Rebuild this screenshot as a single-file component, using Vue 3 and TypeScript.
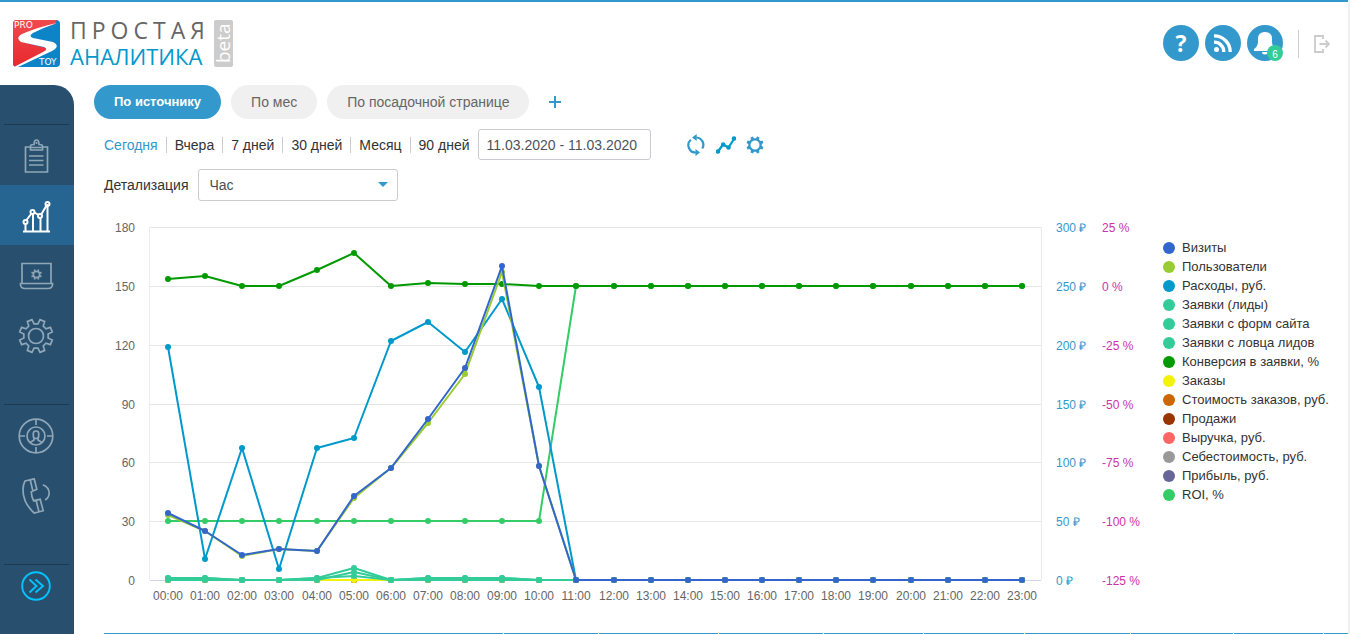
<script setup lang="ts">
import { computed, onBeforeUnmount, onMounted, ref } from 'vue'

interface Series {
  name: string
  color: string
  max: number
  min: number
  values: number[]
}

const tabs = ['По источнику', 'По мес', 'По посадочной странице']
const activeTab = ref(0)
const periods = ['Сегодня', 'Вчера', '7 дней', '30 дней', 'Месяц', '90 дней']
const activePeriod = ref(0)
const dateRange = ref('11.03.2020 - 11.03.2020')
const detail = ref('Час')

const HOURS = 24
const pad = (start: number[], rest = 0): number[] =>
  Array.from({ length: HOURS }, (_, i) => start[i] ?? rest)

const count = (name: string, color: string, start: number[]): Series => ({
  name, color, min: 0, max: 180, values: pad(start),
})
const money = (name: string, color: string, start: number[]): Series => ({
  name, color, min: 0, max: 300, values: pad(start),
})

const series: Series[] = [
  count('Визиты', '#3366cc', [34, 25, 13, 16, 15, 43, 57, 82, 108, 160, 58]),
  count('Пользователи', '#99cc33', [33, 25, 12, 16, 15, 42, 57, 80, 105, 157, 58]),
  money('Расходы, руб.', '#0099cc', [198, 18, 112, 9, 112, 121, 203, 219, 194, 239, 164]),
  count('Заявки (лиды)', '#33cc99', [1, 1, 0, 0, 1, 6, 0, 1, 1, 1]),
  count('Заявки с форм сайта', '#33cc99', [0, 0, 0, 0, 0, 4]),
  count('Заявки с ловца лидов', '#33cc99', [1, 1, 0, 0, 1, 2, 0, 1, 1, 1]),
  { name: 'Конверсия в заявки, %', color: '#009900', min: -125, max: 25, values: pad([2.9, 4, 0, 0, 6.7, 14, 0, 1.2, 0.9, 0.6]) },
  count('Заказы', '#f2f20d', []),
  money('Стоимость заказов, руб.', '#cc6600', []),
  count('Продажи', '#993300', []),
  money('Выручка, руб.', '#ff6666', []),
  money('Себестоимость, руб.', '#999999', []),
  money('Прибыль, руб.', '#666699', []),
  { name: 'ROI, %', color: '#33cc66', min: -125, max: 25, values: pad(Array(11).fill(-100)) },
]
/* Layer order: the first legend entries lie on top, orders cover the other zero lines */
const drawn = [...series].reverse()

const chartBox = ref<HTMLElement | null>(null)
const width = ref(1044)
const LEFT = 46
const TOP = 16
const PLOT_H = 353
const right = computed(() => width.value - 107)
const step = computed(() => (right.value - LEFT) / HOURS)
const px = (i: number) => Math.floor(LEFT + step.value * (i + 0.5))
const py = (s: Series, v: number) => Math.round(TOP + (PLOT_H * (s.max - v)) / (s.max - s.min))
const path = (s: Series) => s.values.map((v, i) => `${px(i)},${py(s, v)}`).join(' ')

const rows = Array.from({ length: 7 }, (_, i) => ({
  y: Math.round(TOP + (PLOT_H * i) / 6),
  left: `${180 - i * 30}`,
  rub: `${300 - i * 50} ₽`,
  pct: `${25 - i * 25} %`,
}))
const hour = (i: number) => `${String(i).padStart(2, '0')}:00`

/* Outline of a toothed wheel centred on c */
function gear(c: number, outer: number, inner: number, teeth: number): string {
  const pts: string[] = []
  const turn = (Math.PI * 2) / teeth
  for (let i = 0; i < teeth; i++) {
    const a = i * turn + turn / 2
    for (const [o, r] of [[-0.3, inner], [-0.19, outer], [0.19, outer], [0.3, inner]]) {
      pts.push(`${(c + r * Math.cos(a + o * turn)).toFixed(2)} ${(c + r * Math.sin(a + o * turn)).toFixed(2)}`)
    }
  }
  return `M${pts.join('L')}Z`
}

let observer: ResizeObserver | undefined
onMounted(() => {
  if (!chartBox.value) return
  observer = new ResizeObserver(([entry]) => {
    width.value = Math.max(400, Math.round(entry.contentRect.width))
  })
  observer.observe(chartBox.value)
})
onBeforeUnmount(() => observer?.disconnect())
</script>

<template>
  <div class="page">
    <header class="header">
      <a class="logo" href="#" aria-label="Простая аналитика">
        <svg class="mark" viewBox="0 0 47 47">
          <defs>
            <linearGradient id="red" x1="0" y1="0" x2="0" y2="1">
              <stop offset="0" stop-color="#ef4a4e" /><stop offset="1" stop-color="#e8272d" />
            </linearGradient>
            <clipPath id="tile"><rect width="47" height="47" rx="4" /></clipPath>
          </defs>
          <g clip-path="url(#tile)">
            <rect width="47" height="47" fill="#0d84c8" />
            <path d="M0 0H44L42 4 9 15Q3 19 9 22L33 28Q36 30 30 33L1 47H0Z" fill="url(#red)" />
            <path d="M44 3Q25 7 9 14Q2 18 8 22L31 27Q36 29 30 32L1 47H5L39 31Q48 26 40 22L20 18Q15 16 20 13Q32 7 44 3Z" fill="#fff" />
          </g>
          <text x="1" y="8" class="mark-text">PRO</text>
          <text x="26" y="45" class="mark-text">TOY</text>
        </svg>
        <span class="brand">
          <span class="brand-top">ПРОСТАЯ</span>
          <span class="brand-bottom">АНАЛИТИКА</span>
        </span>
        <span class="beta">beta</span>
      </a>
      <div class="tools">
        <button class="round" aria-label="Помощь"><span class="question">?</span></button>
        <button class="round" aria-label="Новости">
          <svg width="18" height="18" viewBox="0 0 18 18" fill="none" stroke="#fff" stroke-width="3.300">
            <circle cx="2.500" cy="15.500" r="2.500" fill="#fff" stroke="none" />
            <path d="M0 8.200A9.500 9.500 0 0 1 9.800 18M0 1.800A16 16 0 0 1 16.200 18" />
          </svg>
        </button>
        <button class="round" aria-label="Уведомления">
          <svg width="24" height="24" viewBox="0 0 24 24" fill="#fff">
            <path d="M12 1C7 1 5 4 5 8C5 13 5 15 1 18V20H23V18C19 15 19 13 19 8C19 4 17 1 12 1ZM9 21A3 2.500 0 0 0 15 21Z" />
          </svg>
          <span class="badge">6</span>
        </button>
        <button class="logout" aria-label="Выйти">
          <svg width="16" height="18" viewBox="0 0 16 18" fill="none" stroke="#ccc" stroke-width="1.800">
            <path d="M9 4V1H1V17H9V14M5.500 9H15M11.500 5.500 15 9 11.500 12.500" />
          </svg>
        </button>
      </div>
    </header>

    <div class="body">
      <nav class="sidebar">
        <div class="cap"></div>
        <a class="item" href="#" aria-label="Отчёты">
          <svg width="36" height="36" viewBox="0 0 36 36">
            <path d="M12.500 9H7.500V34H29.500V9H24.500M12.500 12V8Q12.500 6.500 16 6.500Q16 2 18.500 2Q21 2 21 6.500Q24.500 6.500 24.500 8V12ZM18.500 4V6M11 18H25.500M11 22.500H25.500M11 27H25.500M12.500 9.500H24.500" />
          </svg>
        </a>
        <a class="item active" href="#" aria-label="Аналитика">
          <svg width="36" height="36" viewBox="0 0 36 36" class="bright">
            <path d="M5 33.500H32M7.500 33V26M15 33V16M22.500 33V20M29.500 33V6M8.500 22 13.500 15.500M16.500 14.500 20.500 17M23.500 16 28.500 7.500" />
            <circle cx="7.500" cy="24" r="2" /><circle cx="14.500" cy="14" r="2" /><circle cx="22" cy="18" r="2" /><circle cx="29.500" cy="6" r="2" />
          </svg>
        </a>
        <a class="item" href="#" aria-label="Сайты">
          <svg width="36" height="36" viewBox="0 0 36 36">
            <path d="M4 25.500V5.500H33V25.500M2.500 25.500H34.500V27Q34 30.500 30 30.500H7Q3 30.500 2.500 27Z" />
            <circle cx="18.500" cy="16.500" r="3.200" />
            <path d="M22 18 23.500 18.600M20 20 20.600 21.500M17 20 16.400 21.500M15 18 13.500 18.600M15 15 13.500 14.400M17 13 16.400 11.500M20 13 20.600 11.500M22 15 23.500 14.400" />
          </svg>
        </a>
        <a class="item" href="#" aria-label="Настройки">
          <svg width="36" height="36" viewBox="0 0 36 36">
            <path :d="gear(18, 16.8, 12.3, 8)" /><circle cx="18" cy="18" r="7.500" />
          </svg>
        </a>
        <div class="space"></div>
        <a class="item" href="#" aria-label="Аудитория">
          <svg width="36" height="36" viewBox="0 0 36 36">
            <circle cx="18" cy="18" r="16.800" /><circle cx="18" cy="18" r="9" />
            <path d="M18 1V7M18 29V35M1 18H7M29 18H35M12 24.500 16 22V20M24 24.500 20 22V20" />
            <rect x="15.300" y="13" width="5.400" height="7.500" rx="2.600" />
          </svg>
        </a>
        <a class="item" href="#" aria-label="Звонки">
          <svg width="36" height="36" viewBox="0 0 36 36">
            <path d="M7 3 16.200 .800 18.800 11.300 13.300 13.700Q13.500 19 15.500 22.700L22.200 21.300 25.200 32.700 16.200 35Q5 25 5 12Q5 6.500 7 3ZM12.200 1.700 14.800 12.700M18.200 22.700 20.800 33.300M24.800 6.700Q31 9 31.200 15.300Q31 19.500 27.200 22" />
          </svg>
        </a>
        <div class="gap"></div>
        <button class="expand" aria-label="Развернуть меню">
          <svg width="30" height="30" viewBox="0 0 30 30" fill="none" stroke="#00c3ff" stroke-width="1.900">
            <circle cx="15" cy="15" r="13.800" /><path d="M8.500 8.500 15.500 15 8.500 21.500M14.500 8.500 22 15 14.500 21.500" />
          </svg>
        </button>
      </nav>

      <main class="main">
        <div class="tabs">
          <button
            v-for="(tab, i) in tabs" :key="tab" class="tab" :class="{ selected: i === activeTab }"
            @click="activeTab = i"
          >{{ tab }}</button>
          <button class="add" aria-label="Добавить вкладку">
            <svg width="12" height="12" viewBox="0 0 12 12" stroke="#3399cc" stroke-width="2"><path d="M6 0V12M0 6H12" /></svg>
          </button>
        </div>

        <div class="filters">
          <div class="periods">
            <a
              v-for="(period, i) in periods" :key="period" href="#" class="period"
              :class="{ current: i === activePeriod }" @click.prevent="activePeriod = i"
            >{{ period }}</a>
          </div>
          <input v-model="dateRange" class="range" type="text" aria-label="Период">
          <div class="actions">
            <button aria-label="Обновить">
              <svg width="20" height="22" viewBox="0 0 20 22" fill="none" stroke="#3399cc" stroke-width="2.200">
                <path d="M10.500 3.500A7.300 7.300 0 0 1 16.300 14.500M4.800 5.800A7.300 7.300 0 0 0 10 18.500" />
                <path d="M6 3.500 10.700 0V7ZM14 18.500 9.500 15V22Z" fill="#3399cc" stroke="none" />
              </svg>
            </button>
            <button aria-label="График">
              <svg width="20" height="18" viewBox="0 0 20 18" fill="#0099cc" stroke="#0099cc" stroke-width="2.200">
                <path d="M2 15.500 7 8.500 12.500 11.500 18 3" fill="none" />
                <circle cx="2" cy="15.500" r="1.200" /><circle cx="7.200" cy="8.500" r="1.200" /><circle cx="12.500" cy="11.500" r="1.200" /><circle cx="18" cy="2.500" r="1.200" />
              </svg>
            </button>
            <button aria-label="Настройка графика">
              <svg width="18" height="18" viewBox="0 0 18 18" fill="#3399cc" fill-rule="evenodd">
                <path :d="gear(9, 8.7, 6.8, 8) + 'M13.500 9A4.500 4.500 0 1 0 4.500 9A4.500 4.500 0 1 0 13.500 9Z'" />
              </svg>
            </button>
          </div>
        </div>

        <div class="detail">
          <label for="detail">Детализация</label>
          <div class="select">
            <select id="detail" v-model="detail">
              <option>Час</option><option>День</option><option>Неделя</option>
            </select>
          </div>
        </div>

        <section class="report">
          <div ref="chartBox" class="chart">
            <svg :width="width" height="399" role="img" aria-label="График показателей по часам">
              <g class="grid">
                <line v-for="r in rows" :key="r.y" :x1="LEFT" :x2="right" :y1="r.y + 0.5" :y2="r.y + 0.5" />
              </g>
              <path class="frame" :d="`M${LEFT - 0.5} ${TOP}V${TOP + PLOT_H}M${right + 0.5} ${TOP}V${TOP + PLOT_H}`" />
              <line class="base" :x1="LEFT" :x2="right" :y1="TOP + PLOT_H + 0.5" :y2="TOP + PLOT_H + 0.5" />
              <g v-for="s in drawn" :key="s.name" :fill="s.color" :stroke="s.color">
                <polyline :points="path(s)" fill="none" stroke-width="2" stroke-linejoin="round" />
                <circle v-for="(v, i) in s.values" :key="i" :cx="px(i)" :cy="py(s, v)" r="3" stroke="none" />
              </g>
              <g v-for="r in rows" :key="r.left">
                <text class="tick" text-anchor="end" :x="LEFT - 15" :y="r.y + 5">{{ r.left }}</text>
                <text class="tick rub" :x="right + 15" :y="r.y + 5">{{ r.rub }}</text>
                <text class="tick pct" :x="right + 61" :y="r.y + 5">{{ r.pct }}</text>
              </g>
              <text
                v-for="i in HOURS" :key="i" class="tick" text-anchor="middle" :x="px(i - 1)" :y="TOP + PLOT_H + 20"
              >{{ hour(i - 1) }}</text>
            </svg>
          </div>
          <ul class="legend">
            <li v-for="s in series" :key="s.name"><i :style="{ background: s.color }"></i>{{ s.name }}</li>
          </ul>
        </section>

        <div class="table-head"><span v-for="n in 10" :key="n"></span></div>
      </main>
    </div>
  </div>
</template>

<style>
body { margin: 0; }
</style>

<style scoped>
* { box-sizing: border-box; }
.page {
  display: flex;
  flex-direction: column;
  height: 100vh;
  overflow: hidden;
  border-right: 2px solid #f1f1f1;
  background: #fff;
  color: #333;
  font: 14px/20px "Liberation Sans", Arial, sans-serif;
}
button { padding: 0; border: 0; background: none; font: inherit; cursor: pointer; }
a { color: inherit; text-decoration: none; }
svg { display: block; }

.header {
  display: flex;
  flex: none;
  justify-content: space-between;
  height: 85px;
  padding: 18px 18px 0 13px;
  border-top: 2px solid #3399cc;
}
.logo { display: flex; align-items: flex-start; }
.mark { width: 47px; height: 47px; }
.mark-text { fill: #fff; font: 9px "DejaVu Sans", sans-serif; }
.brand {
  display: flex;
  flex-direction: column;
  width: 146px;
  padding-left: 10px;
  font-family: "Open Sans", "Noto Sans", sans-serif;
  white-space: nowrap;
}
.brand-top { color: #666; font-size: 23px; line-height: 20px; letter-spacing: 5px; }
.brand-bottom { color: #0099cc; font-size: 22px; line-height: 33px; }
.beta {
  display: flex;
  align-items: center;
  justify-content: center;
  width: 19px;
  height: 47px;
  margin-left: 8px;
  border-radius: 2px;
  background: #ccc;
  color: #fff;
  font: 19px/19px "Open Sans", "Noto Sans", sans-serif;
  writing-mode: vertical-rl;
  rotate: 180deg;
}
.tools { display: flex; gap: 6px; height: 36px; margin-top: 5px; }
.round {
  position: relative;
  display: flex;
  align-items: center;
  justify-content: center;
  width: 36px;
  height: 36px;
  border-radius: 50%;
  background: #3399cc;
}
.question { color: #fff; font: bold 23px/34px "Open Sans", sans-serif; }
.badge {
  position: absolute;
  right: 0;
  bottom: 0;
  width: 16px;
  height: 16px;
  border-radius: 50%;
  background: #33cc99;
  color: #fff;
  font-size: 10px;
  line-height: 19px;
  text-align: center;
}
.logout {
  display: flex;
  align-items: center;
  height: 28px;
  margin: 5px 0 0 9px;
  padding-left: 15px;
  border-left: 1px solid #ccc;
}

.body { display: flex; flex: 1; min-height: 0; }
.sidebar {
  display: flex;
  flex: none;
  flex-direction: column;
  width: 74px;
  border-top-right-radius: 20px;
  background: #28506e;
}
.cap, .space, .gap { height: 40px; margin: 0 5px 0 4px; border-bottom: 1px solid #1a3a52; }
.item {
  display: flex;
  align-items: center;
  justify-content: center;
  height: 60px;
  padding: 1px 2px 0 0;
}
.item svg { fill: none; stroke: #8ea6b7; stroke-width: 1.7; }
.item.active { background: #266491; }
.item svg.bright { stroke: #fff; stroke-width: 2; }
.expand { display: flex; justify-content: center; padding: 6px 2px 0 0; }

.main { flex: 1; min-width: 0; padding-left: 30px; }
.tabs { display: flex; gap: 10px; height: 34px; margin-left: -10px; }
.tab {
  height: 34px;
  padding: 0 20px;
  border-radius: 17px;
  background: #f0f0f0;
  color: #666;
}
.tab.selected { background: #3399cc; color: #fff; font-size: 13px; font-weight: bold; }
.add { padding: 0 10px; }

.filters { display: flex; align-items: center; height: 31px; margin-top: 10px; }
.periods { display: flex; }
.period { padding: 0 8px; line-height: 16px; border-left: 1px solid #ccc; }
.period:first-child { padding-left: 0; border-left: 0; }
.current { color: #3399cc; }
.range {
  width: 173px;
  height: 31px;
  padding: 0 8px;
  border: 1px solid #c8ccd2;
  border-radius: 3px;
  background: #fff;
  color: #4d535b;
  font: inherit;
}
.actions { display: flex; align-items: center; gap: 10px; padding-left: 35px; }

.detail { display: flex; align-items: center; gap: 10px; height: 32px; margin-top: 9px; }
.select { position: relative; width: 200px; }
.select::after {
  position: absolute;
  top: 13px;
  right: 10px;
  border: 5px solid transparent;
  border-top-color: #3399cc;
  content: "";
  pointer-events: none;
}
.select select {
  width: 100%;
  height: 32px;
  padding: 0 10px;
  border: 1px solid #ccc;
  border-radius: 3px;
  appearance: none;
  background: #fff;
  color: #4d4d4d;
  font: inherit;
}

.report { display: flex; margin-top: 10px; }
.chart { flex: 1; min-width: 0; overflow: hidden; }
.grid line { stroke: #e6e6e6; }
.frame { fill: none; stroke: #ebebf8; }
.base { stroke: #ccd6eb; }
.tick { fill: #666; font-size: 12px; }
.tick.rub { fill: #3399cc; }
.tick.pct { fill: #cc33aa; }
.legend {
  flex: none;
  width: 200px;
  margin: 0;
  padding: 27px 0 0 15px;
  font-size: 13px;
  line-height: 19px;
  list-style: none;
  white-space: nowrap;
}
.legend li { display: flex; align-items: center; gap: 7px; }
.legend i { width: 12px; height: 12px; border-radius: 50%; }

.table-head {
  display: grid;
  grid-template-columns: 399fr 94fr 119fr 104fr 99fr 100fr 105fr 102fr 89fr 24fr;
  gap: 1px;
  margin-top: 23px;
}
.table-head span { height: 40px; background: #3399cc; }
</style>
